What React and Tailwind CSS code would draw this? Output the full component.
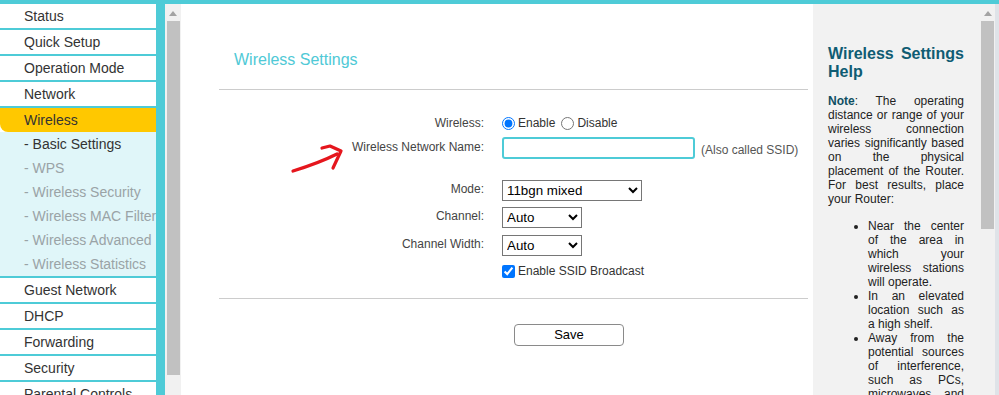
import React from 'react';

const menuTop = ['Status', 'Quick Setup', 'Operation Mode', 'Network'];
const subMenu = [
  { label: '- Basic Settings', active: true },
  { label: '- WPS' },
  { label: '- Wireless Security' },
  { label: '- Wireless MAC Filtering' },
  { label: '- Wireless Advanced' },
  { label: '- Wireless Statistics' },
];
const menuBottom = ['Guest Network', 'DHCP', 'Forwarding', 'Security', 'Parental Controls'];

const Arrow = () => (
  <svg width="8" height="5" viewBox="0 0 8 5" className="block">
    <path d="M0 5 L4 0 L8 5 Z" fill="#a3a3a3" />
  </svg>
);

const App = () => {
  return (
    <div className="h-[395px] w-[999px] overflow-hidden flex flex-col bg-white font-['Liberation_Sans',Arial,sans-serif] text-[#333]">
      <div className="h-[4px] shrink-0 bg-[#4ecbd7]" />
      <div className="flex flex-1 min-h-0">
        {/* Menu */}
        <div className="w-[156px] shrink-0 text-[14px]">
          {menuTop.map((item) => (
            <div key={item} className="h-[26px] border-b-2 border-[#4ecbd7] pl-[24px] leading-[24px] whitespace-nowrap">
              {item}
            </div>
          ))}
          <div className="h-[24px] bg-[#ffc800] rounded-bl-[8px] pl-[24px] leading-[24px]">Wireless</div>
          <div className="bg-[#e0f6f9] border-b-2 border-[#4ecbd7]">
            {subMenu.map((s) => (
              <div
                key={s.label}
                className={`h-[24px] pl-[24px] leading-[24px] whitespace-nowrap overflow-hidden ${s.active ? 'text-[#333]' : 'text-[#9aa3a6]'}`}
              >
                {s.label}
              </div>
            ))}
          </div>
          {menuBottom.map((item) => (
            <div key={item} className="h-[26px] border-b-2 border-[#4ecbd7] pl-[24px] leading-[24px] whitespace-nowrap">
              {item}
            </div>
          ))}
        </div>
        <div className="w-[9px] shrink-0 bg-[#4ecbd7]" />
        {/* left scrollbar */}
        <div className="w-[16px] shrink-0 bg-[#f1f1f1] flex flex-col items-center">
          <div className="h-[17px] flex items-center justify-center pt-[1px]">
            <Arrow />
          </div>
          <div className="w-[13px] h-[354px] bg-[#c1c1c1]" />
        </div>

        {/* Main */}
        <div className="relative w-[632px] shrink-0 pl-[38px] pr-[5px] pt-[47px]">
          <div className="pl-[15px] h-[18px] leading-[18px] text-[16px] text-[#4fc9d6]">Wireless Settings</div>
          <div className="mt-[20px] border-t border-[#cccccc]" />

          <div className="mt-[22px] text-[12px]">
            <div className="flex h-[22px] items-center">
              <div className="w-[265px] text-right text-[#444]">Wireless:</div>
              <div className="ml-[18px] flex items-center">
                <input type="radio" name="w" defaultChecked className="m-0 w-[13px] h-[13px] accent-[#0075ff]" />
                <span className="ml-[3px]">Enable</span>
                <input type="radio" name="w" className="m-0 ml-[6px] w-[13px] h-[13px]" />
                <span className="ml-[3px]">Disable</span>
              </div>
            </div>
            <div className="flex h-[22px] items-center mt-[3px]">
              <div className="w-[265px] text-right text-[#444] -mt-[2px]">Wireless Network Name:</div>
              <input
                type="text"
                className="ml-[18px] w-[193px] h-[22px] border-2 border-[#4ecbd7] rounded-[3px] bg-white outline-none"
              />
              <span className="ml-[6px] text-[#555] mt-[4px]">(Also called SSID)</span>
            </div>
            <div className="flex h-[22px] items-center mt-[20px]">
              <div className="w-[265px] text-right text-[#444] -mt-[2px]">Mode:</div>
              <select className="ml-[18px] w-[140px] h-[21px] border border-[#767676] bg-white text-[13.33px] text-black">
                <option>11bgn mixed</option>
              </select>
            </div>
            <div className="flex h-[22px] items-center mt-[5px]">
              <div className="w-[265px] text-right text-[#444] -mt-[2px]">Channel:</div>
              <select className="ml-[18px] w-[80px] h-[21px] border border-[#767676] bg-white text-[13.33px] text-black">
                <option>Auto</option>
              </select>
            </div>
            <div className="flex h-[22px] items-center mt-[6px]">
              <div className="w-[265px] text-right text-[#444] -mt-[2px]">Channel Width:</div>
              <select className="ml-[18px] w-[80px] h-[21px] border border-[#767676] bg-white text-[13.33px] text-black">
                <option>Auto</option>
              </select>
            </div>
            <div className="flex h-[22px] items-center mt-[4px]">
              <div className="w-[265px]" />
              <div className="ml-[18px] flex items-center">
                <input type="checkbox" defaultChecked className="m-0 w-[13px] h-[13px] accent-[#0075ff]" />
                <span className="ml-[3px]">Enable SSID Broadcast</span>
              </div>
            </div>
          </div>

          <div className="mt-[16px] border-t border-[#cccccc]" />
          <div className="mt-[23px] pl-[295px]">
            <button className="w-[110px] h-[22px] border border-[#8a8a8a] rounded-[4px] bg-white text-[13px] text-black">
              Save
            </button>
          </div>

          {/* annotation arrow */}
          <svg className="absolute left-0 top-0 pointer-events-none" width="632" height="391">
            <path
              d="M112 167 C 125 163, 140 158, 156 150"
              stroke="#e5161d"
              strokeWidth="3.2"
              fill="none"
              strokeLinecap="round"
            />
            <path
              d="M141 144 L149 142 L160 147 L152 164"
              stroke="#e5161d"
              strokeWidth="3.2"
              fill="none"
              strokeLinecap="round"
              strokeLinejoin="round"
            />
          </svg>
        </div>

        {/* Help */}
        <div className="w-[167px] shrink-0 bg-[#f2f2f2] pl-[15px] pr-[16px] pt-[41px] overflow-hidden">
          <div className="text-[16px] leading-[18px] font-bold text-[#0f5c73] text-justify">Wireless Settings Help</div>
          <div className="mt-[13px] text-[12px] leading-[14px] text-[#222] text-justify">
            <p>
              <b className="text-[#0f4f63]">Note</b>: The operating distance or range of your wireless connection varies
              significantly based on the physical placement of the Router. For best results, place your Router:
            </p>
            <ul className="list-disc pl-[40px] mt-[13px]">
              <li>Near the center of the area in which your wireless stations will operate.</li>
              <li>In an elevated location such as a high shelf.</li>
              <li>Away from the potential sources of interference, such as PCs, microwaves, and cordless phones.</li>
            </ul>
          </div>
        </div>
        {/* right scrollbar */}
        <div className="w-[15px] shrink-0 bg-[#f1f1f1] flex flex-col items-center">
          <div className="h-[17px] flex items-center justify-center pt-[1px]">
            <Arrow />
          </div>
          <div className="w-[13px] h-[208px] bg-[#c1c1c1]" />
        </div>
        <div className="w-[4px] shrink-0 bg-[#dfe3e8]" />
      </div>
    </div>
  );
};

export default App;
